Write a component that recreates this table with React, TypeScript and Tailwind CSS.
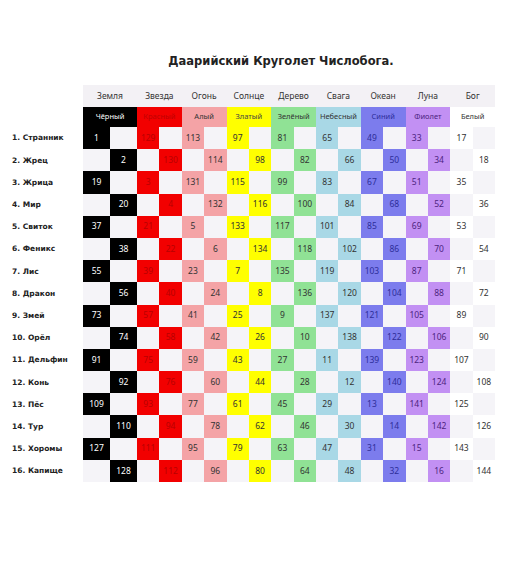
import React from "react";

const groups = [
  { head: "Земля", name: "Чёрный", bg: "bg-[#000000]", text: "text-white", nameText: "text-white" },
  { head: "Звезда", name: "Красный", bg: "bg-[#f20000]", text: "text-[#b80000]", nameText: "text-[#c00000]" },
  { head: "Огонь", name: "Алый", bg: "bg-[#f4a3a6]", text: "text-[#333333]", nameText: "text-[#333333]" },
  { head: "Солнце", name: "Златый", bg: "bg-[#ffff00]", text: "text-[#333333]", nameText: "text-[#444444]" },
  { head: "Дерево", name: "Зелёный", bg: "bg-[#90e295]", text: "text-[#333333]", nameText: "text-[#333333]" },
  { head: "Свага", name: "Небесный", bg: "bg-[#a9d8e6]", text: "text-[#333333]", nameText: "text-[#333333]" },
  { head: "Океан", name: "Синий", bg: "bg-[#7c7ced]", text: "text-[#2e2e9a]", nameText: "text-[#2e2e9a]" },
  { head: "Луна", name: "Фиолет", bg: "bg-[#c290f3]", text: "text-[#4d2480]", nameText: "text-[#4d2480]" },
  { head: "Бог", name: "Белый", bg: "bg-white", text: "text-[#333333]", nameText: "text-[#333333]" },
];

const labels = [
  "1. Странник",
  "2. Жрец",
  "3. Жрица",
  "4. Мир",
  "5. Свиток",
  "6. Феникс",
  "7. Лис",
  "8. Дракон",
  "9. Змей",
  "10. Орёл",
  "11. Дельфин",
  "12. Конь",
  "13. Пёс",
  "14. Тур",
  "15. Хоромы",
  "16. Капище",
];

function value(r: number, g: number) {
  const p = Math.floor(r / 2);
  const o = (r % 2) + 1;
  return 2 * p + o + 16 * ((9 - g + p) % 9);
}

export default function App() {
  return (
    <div className="w-[512px] h-[573px] bg-white relative" style={{ fontFamily: "'Noto Sans', 'DejaVu Sans', sans-serif" }}>
      <div className="pt-[53px] h-[85px]">
        <h1
          className="text-[11.5px] font-bold text-[#222222] text-center pl-[50px] leading-[16px]"
          style={{ fontFamily: "'DejaVu Sans', sans-serif" }}
        >
          Даарийский Круголет Числобога.
        </h1>
      </div>
      <div className="grid grid-cols-[83px_27px_27px_repeat(16,22.375px)]">
        <div className="h-[22px]" />
        {groups.map((g) => (
          <div
            key={g.head}
            className="col-span-2 h-[22px] bg-[#f3f1f5] flex items-center justify-center text-[8.5px] text-[#333333]"
          >
            {g.head}
          </div>
        ))}
        <div className="h-[20px]" />
        {groups.map((g) => (
          <div
            key={g.name}
            className={`col-span-2 h-[20px] flex items-center justify-center text-[7.5px] ${g.bg} ${g.nameText}`}
          >
            {g.name}
          </div>
        ))}
        {labels.map((label, r) => (
          <React.Fragment key={label}>
            <div
              className="h-[22.2px] flex items-center pl-[12px] text-[7.5px] font-bold text-[#222222]"
              style={{ fontFamily: "'DejaVu Sans', sans-serif" }}
            >
              {label}
            </div>
            {groups.map((g, gi) => {
              const colored = r % 2;
              return [0, 1].map((s) =>
                s === colored ? (
                  <div
                    key={`${gi}-${s}`}
                    className={`h-[22.2px] flex items-center justify-center text-[8.5px] ${g.bg} ${g.text}`}
                  >
                    {value(r, gi)}
                  </div>
                ) : (
                  <div key={`${gi}-${s}`} className="h-[22.2px] bg-[#f5f4f8]" />
                )
              );
            })}
          </React.Fragment>
        ))}
      </div>
    </div>
  );
}
